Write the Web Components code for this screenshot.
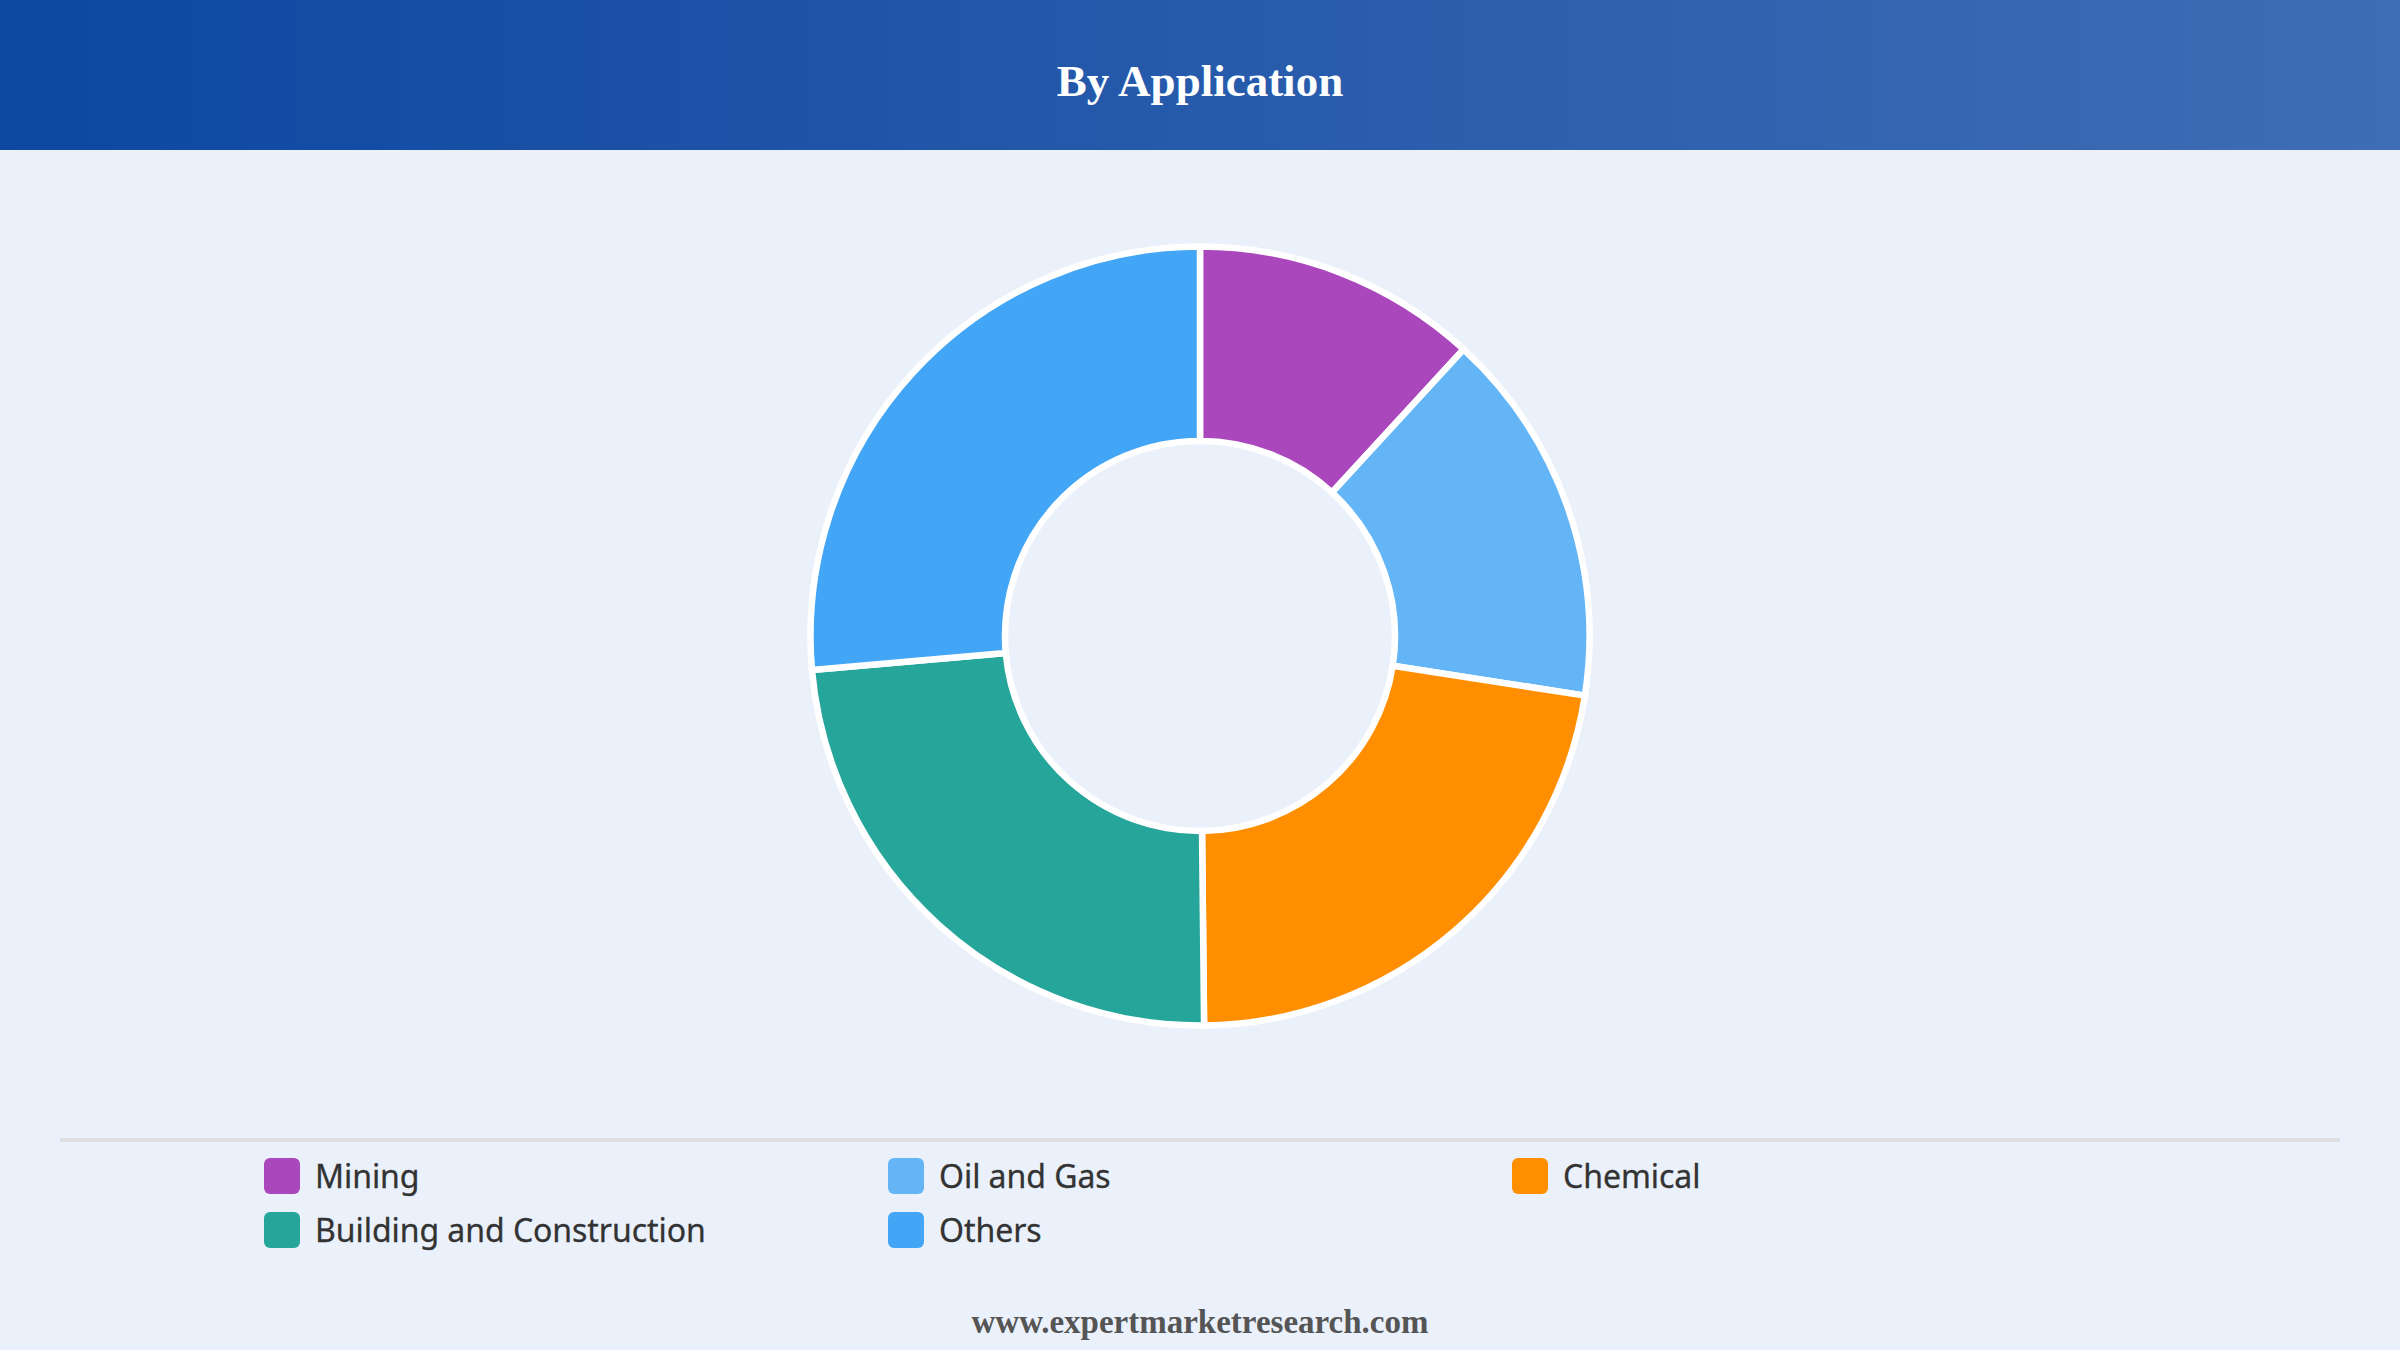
<!DOCTYPE html>
<html lang="en"><head><meta charset="utf-8"><title>By Application</title>
<style>html,body{margin:0;padding:0;background:#eaf1fb;}</style></head>
<body>
<report-page>
  <report-header>By Application</report-header>
  <donut-chart></donut-chart>
  <chart-legend>
    <legend-item color="#ab47bc">Mining</legend-item>
    <legend-item color="#64b5f6">Oil and Gas</legend-item>
    <legend-item color="#ff8f00">Chemical</legend-item>
    <legend-item color="#26a69a">Building and Construction</legend-item>
    <legend-item color="#42a5f5">Others</legend-item>
  </chart-legend>
  <report-footer>www.expertmarketresearch.com</report-footer>
</report-page>
<script>
function def(name, html, extra){
  customElements.define(name, class extends HTMLElement{
    constructor(){super();this.attachShadow({mode:'open'}).innerHTML=html;}
    connectedCallback(){ if(extra) extra.call(this); }
  });
}
def('report-page',`<style>:host{display:flex;flex-direction:column;width:2400px;height:1350px;background:#eaf1fb;overflow:hidden}</style><slot></slot>`);
def('report-header',`<style>:host{display:flex;justify-content:center;align-items:center;box-sizing:border-box;height:150px;padding-top:12px;background:linear-gradient(90deg,#0d47a1,#3f6db5);color:#fff;font:bold 45px/1.2 "Liberation Serif",serif}</style><slot></slot>`);
const DATA=[['#ab47bc',42.6],['#64b5f6',98.8],['#ff8f00',179.4],['#26a69a',265],['#42a5f5',360]];
def('donut-chart',`<style>:host{display:flex;justify-content:center;box-sizing:border-box;height:988px;padding-top:86px}svg{display:block;width:800px;height:800px}</style><svg viewBox="-400 -400 800 800"></svg>`,function(){
  const svg=this.shadowRoot.querySelector('svg');
  const R=389.5,r=195;let a0=0,out='';
  const p=(rad,deg)=>{const t=deg*Math.PI/180;return (rad*Math.sin(t)).toFixed(2)+' '+(-rad*Math.cos(t)).toFixed(2);};
  for(const [c,a1] of DATA){
    const l=(a1-a0)>180?1:0;
    out+=`<path d="M${p(R,a0)}A${R} ${R} 0 ${l} 1 ${p(R,a1)}L${p(r,a1)}A${r} ${r} 0 ${l} 0 ${p(r,a0)}Z" fill="${c}" stroke="#fff" stroke-width="6.5" stroke-linejoin="miter"/>`;
    a0=a1;
  }
  svg.innerHTML=out;
});
def('chart-legend',`<style>:host{display:grid;grid-template-columns:repeat(3,624px);grid-auto-rows:54px;align-content:start;box-sizing:border-box;height:166px;margin:0 60px;padding:16px 0 0 204px;border-top:4px solid #dddfe2}</style><slot></slot>`);
def('legend-item',`<style>:host{display:flex;align-items:center;gap:15px;height:36px;color:#333;font:32px/36px "Noto Sans",sans-serif;letter-spacing:-.05px;-webkit-text-stroke:.3px #333}i{display:block;flex:none;width:36px;height:36px;border-radius:6px;background:var(--c)}</style><i></i><span><slot></slot></span>`,function(){this.shadowRoot.querySelector('i').style.setProperty('--c',this.getAttribute('color'));});
def('report-footer',`<style>:host{display:block;text-align:center;color:#555;font:bold 33px/36px "Liberation Serif",serif}</style><slot></slot>`);
</script>
</body></html>
